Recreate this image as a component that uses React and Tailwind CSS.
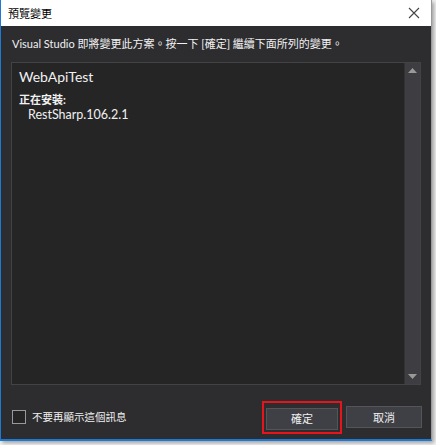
import React from 'react';

const font = { fontFamily: 'Lato, "Noto Sans CJK TC", sans-serif' };

const App = () => {
  return (
    <div className="w-[436px] h-[445px] bg-[#f3f3f3] overflow-hidden" style={font}>
      <div className="w-[432px] h-[441px] flex flex-col bg-[#2d2d30] border-l border-r border-b-2 border-l-[#1c7ad6] border-r-[#9a9a9a] border-b-[#1c7ad6] shadow-[2px_2px_4px_rgba(0,0,0,0.35)]">
        {/* Title bar */}
        <div className="h-[26px] bg-white flex items-center justify-between pl-[7px] pr-[10px] shrink-0">
          <span className="text-[11px] text-black leading-none">預覽變更</span>
          <svg width="12" height="12" viewBox="0 0 12 12" className="mr-[1px]">
            <path d="M1 1 L11 11 M11 1 L1 11" stroke="#444" strokeWidth="1.1" />
          </svg>
        </div>

        {/* Body */}
        <div className="flex-1 flex flex-col px-[10px] pt-[10px]">
          <p className="text-[11px] text-[#f1f1f1] leading-[16px] pl-[1px]">
            Visual Studio 即將變更此方案。按一下 [確定] 繼續下面所列的變更。
          </p>

          <div className="mt-[10px] h-[323px] flex border border-[#434346] bg-[#252526]">
            <div className="flex-1 pl-[7px] pt-[4px]">
              <div className="text-[14px] text-[#f1f1f1] leading-[20px]">WebApiTest</div>
              <div className="mt-[5px] text-[11px] font-bold text-[#f1f1f1] leading-[15px]">正在安裝:</div>
              <div className="pl-[9px] text-[12.5px] text-[#f1f1f1] leading-[15px]">RestSharp.106.2.1</div>
            </div>
            <div className="w-[16px] bg-[#3e3e42] flex flex-col items-center justify-between py-[5px] border-l border-[#333337]">
              <svg width="9" height="5" viewBox="0 0 9 5">
                <path d="M0 5 L4.5 0 L9 5 Z" fill="#999999" />
              </svg>
              <svg width="9" height="5" viewBox="0 0 9 5">
                <path d="M0 0 L9 0 L4.5 5 Z" fill="#999999" />
              </svg>
            </div>
          </div>

          {/* Footer */}
          <div className="flex items-center justify-between mt-[20px]">
            <label className="flex items-center gap-[6px] pl-[1px]">
              <span className="w-[14px] h-[14px] border border-[#999999] bg-[#252526]" />
              <span className="text-[10.5px] text-[#f1f1f1] leading-none">不要再顯示這個訊息</span>
            </label>
            <div className="flex items-center gap-[6px] -mr-[1px]">
              <div className="outline outline-2 outline-[#e8141b] outline-offset-[2px]">
                <button className="w-[72px] h-[22px] bg-[#3f3f46] border border-[#555558] text-[11px] text-[#f1f1f1] leading-none">
                  確定
                </button>
              </div>
              <button className="ml-[2px] w-[76px] h-[22px] bg-[#3f3f46] border border-[#555558] text-[11px] text-[#f1f1f1] leading-none">
                取消
              </button>
            </div>
          </div>
        </div>
      </div>
    </div>
  );
};

export default App;
